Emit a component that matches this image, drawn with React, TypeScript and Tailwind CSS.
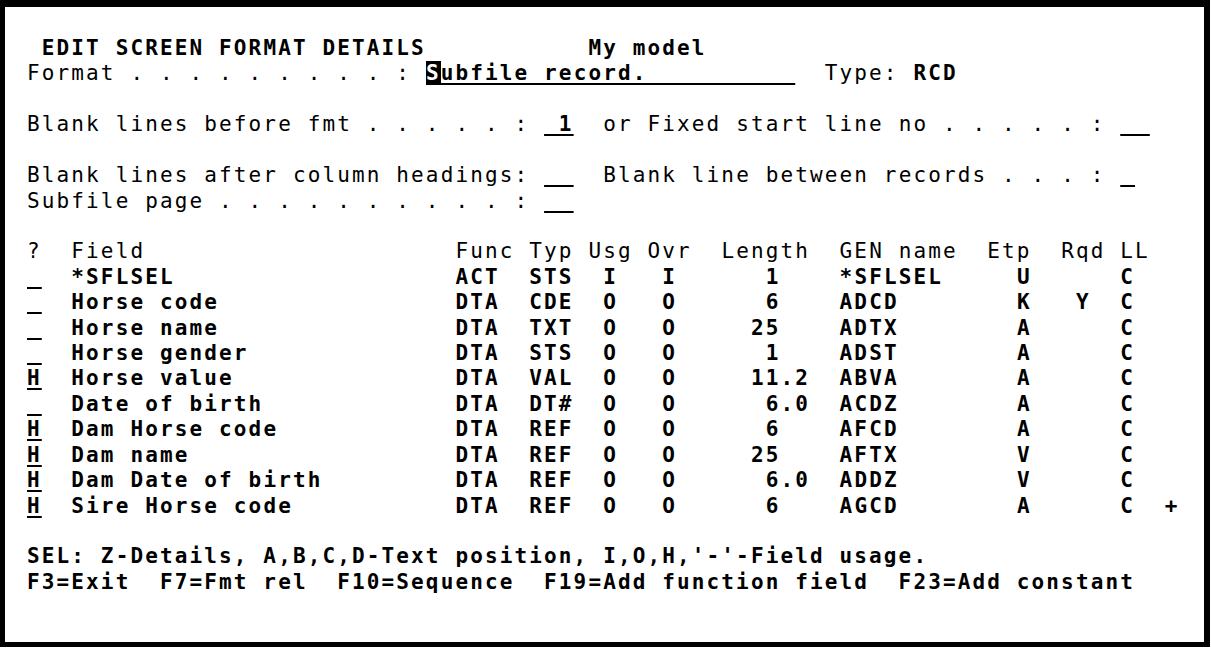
import React from 'react';
import clsx from 'clsx';

type Seg = { col: number; text: string; b?: boolean; u?: boolean; cur?: boolean };

// one 5250 screen row: segments are placed on an 80 column grid
const Line: React.FC<{ segs?: Seg[] }> = ({ segs = [] }) => {
  const out: React.ReactNode[] = [];
  let pos = 0;
  segs.forEach((s, i) => {
    if (s.col > pos) out.push(<React.Fragment key={`g${i}`}>{' '.repeat(s.col - pos)}</React.Fragment>);
    out.push(
      <span
        key={i}
        className={clsx(
          s.b && 'font-bold',
          s.u && 'underline decoration-2 underline-offset-[3px]',
          s.cur && 'bg-black text-white'
        )}
      >
        {s.text}
      </span>
    );
    pos = s.col + s.text.length;
  });
  return <div className="h-[25.43px] whitespace-pre">{out}</div>;
};

type Row = {
  sel: string;
  name: string;
  func: string;
  typ: string;
  usg: string;
  ovr: string;
  len: string;
  gen: string;
  etp: string;
  rqd: string;
  ll: string;
  more?: boolean;
};

const rows: Row[] = [
  { sel: ' ', name: '*SFLSEL', func: 'ACT', typ: 'STS', usg: 'I', ovr: 'I', len: '1', gen: '*SFLSEL', etp: 'U', rqd: '', ll: 'C' },
  { sel: ' ', name: 'Horse code', func: 'DTA', typ: 'CDE', usg: 'O', ovr: 'O', len: '6', gen: 'ADCD', etp: 'K', rqd: 'Y', ll: 'C' },
  { sel: ' ', name: 'Horse name', func: 'DTA', typ: 'TXT', usg: 'O', ovr: 'O', len: '25', gen: 'ADTX', etp: 'A', rqd: '', ll: 'C' },
  { sel: ' ', name: 'Horse gender', func: 'DTA', typ: 'STS', usg: 'O', ovr: 'O', len: '1', gen: 'ADST', etp: 'A', rqd: '', ll: 'C' },
  { sel: 'H', name: 'Horse value', func: 'DTA', typ: 'VAL', usg: 'O', ovr: 'O', len: '11.2', gen: 'ABVA', etp: 'A', rqd: '', ll: 'C' },
  { sel: ' ', name: 'Date of birth', func: 'DTA', typ: 'DT#', usg: 'O', ovr: 'O', len: '6.0', gen: 'ACDZ', etp: 'A', rqd: '', ll: 'C' },
  { sel: 'H', name: 'Dam Horse code', func: 'DTA', typ: 'REF', usg: 'O', ovr: 'O', len: '6', gen: 'AFCD', etp: 'A', rqd: '', ll: 'C' },
  { sel: 'H', name: 'Dam name', func: 'DTA', typ: 'REF', usg: 'O', ovr: 'O', len: '25', gen: 'AFTX', etp: 'V', rqd: '', ll: 'C' },
  { sel: 'H', name: 'Dam Date of birth', func: 'DTA', typ: 'REF', usg: 'O', ovr: 'O', len: '6.0', gen: 'ADDZ', etp: 'V', rqd: '', ll: 'C' },
  { sel: 'H', name: 'Sire Horse code', func: 'DTA', typ: 'REF', usg: 'O', ovr: 'O', len: '6', gen: 'AGCD', etp: 'A', rqd: '', ll: 'C', more: true },
];

const rowSegs = (r: Row): Seg[] => {
  const intLen = r.len.split('.')[0].length;
  const segs: Seg[] = [
    { col: 0, text: r.sel, b: true, u: true },
    { col: 3, text: r.name, b: true },
    { col: 29, text: r.func, b: true },
    { col: 34, text: r.typ, b: true },
    { col: 39, text: r.usg, b: true },
    { col: 43, text: r.ovr, b: true },
    { col: 51 - intLen, text: r.len, b: true },
    { col: 55, text: r.gen, b: true },
    { col: 67, text: r.etp, b: true },
  ];
  if (r.rqd) segs.push({ col: 71, text: r.rqd, b: true });
  segs.push({ col: 74, text: r.ll, b: true });
  if (r.more) segs.push({ col: 77, text: '+', b: true });
  return segs;
};

export default function App() {
  return (
    <div className="w-[1211px] h-[650px] bg-white">
      <div className="w-[1210px] h-[647px] border-black border-t-[7px] border-l-[5px] border-r-[6px] border-b-[5px] pt-[29px] pl-[22px] text-black font-['DejaVu_Sans_Mono','Liberation_Mono',monospace] text-[21px] leading-[25.43px] tracking-[2.13px] overflow-hidden">
        <Line segs={[{ col: 1, text: 'EDIT SCREEN FORMAT DETAILS', b: true }, { col: 38, text: 'My model', b: true }]} />
        <Line
          segs={[
            { col: 0, text: 'Format . . . . . . . . . :' },
            { col: 27, text: 'S', b: true, cur: true },
            { col: 28, text: 'ubfile record.          ', b: true, u: true },
            { col: 54, text: 'Type: ' },
            { col: 60, text: 'RCD', b: true },
          ]}
        />
        <Line />
        <Line
          segs={[
            { col: 0, text: 'Blank lines before fmt . . . . . :' },
            { col: 35, text: ' 1', b: true, u: true },
            { col: 39, text: 'or Fixed start line no . . . . . :' },
            { col: 74, text: '  ', u: true },
          ]}
        />
        <Line />
        <Line
          segs={[
            { col: 0, text: 'Blank lines after column headings:' },
            { col: 35, text: '  ', u: true },
            { col: 39, text: 'Blank line between records . . . :' },
            { col: 74, text: ' ', u: true },
          ]}
        />
        <Line segs={[{ col: 0, text: 'Subfile page . . . . . . . . . . :' }, { col: 35, text: '  ', u: true }]} />
        <Line />
        <Line
          segs={[
            { col: 0, text: '?' },
            { col: 3, text: 'Field' },
            { col: 29, text: 'Func' },
            { col: 34, text: 'Typ' },
            { col: 38, text: 'Usg' },
            { col: 42, text: 'Ovr' },
            { col: 47, text: 'Length' },
            { col: 55, text: 'GEN name' },
            { col: 65, text: 'Etp' },
            { col: 70, text: 'Rqd' },
            { col: 74, text: 'LL' },
          ]}
        />
        {rows.map((r, i) => (
          <Line key={i} segs={rowSegs(r)} />
        ))}
        <Line />
        <Line segs={[{ col: 0, text: "SEL: Z-Details, A,B,C,D-Text position, I,O,H,'-'-Field usage.", b: true }]} />
        <Line
          segs={[{ col: 0, text: 'F3=Exit  F7=Fmt rel  F10=Sequence  F19=Add function field  F23=Add constant', b: true }]}
        />
      </div>
    </div>
  );
}
